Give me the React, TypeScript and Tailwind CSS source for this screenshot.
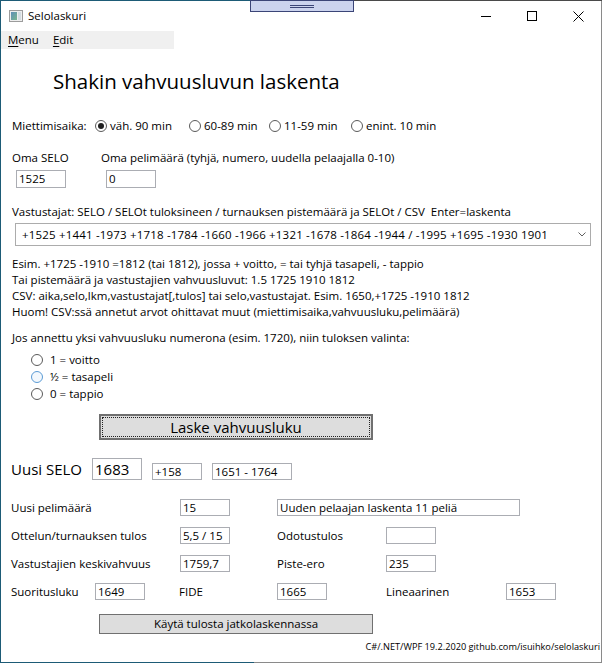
import React from 'react';

const FONT = "font-['Open_Sans','Noto_Sans',sans-serif]";

const Field = ({ className, text }: { className: string; text?: string }) => (
  <div
    className={`flex shrink-0 items-center overflow-hidden whitespace-nowrap border border-[#abadb3] bg-white pl-[2px] ${className}`}
  >
    {text}
  </div>
);

const Radio = ({ checked, hover }: { checked?: boolean; hover?: boolean }) => (
  <span
    className={`flex h-[12px] w-[12px] shrink-0 items-center justify-center rounded-full border ${
      hover ? 'border-[#5b9bd5] bg-[#f3f8fd]' : 'border-[#5a5a5a] bg-white'
    }`}
  >
    {checked && <span className="h-[6px] w-[6px] rounded-full bg-[#1f1f1f]" />}
  </span>
);

const TimeOption = ({ label, className, checked }: { label: string; className: string; checked?: boolean }) => (
  <div className={`flex items-center gap-[3px] ${className}`}>
    <Radio checked={checked} />
    <span>{label}</span>
  </div>
);

const ResultOption = ({ label, hover }: { label: string; hover?: boolean }) => (
  <div className="ml-[30px] flex h-[17px] items-center gap-[7px]">
    <Radio hover={hover} />
    <span>{label}</span>
  </div>
);

const AppIcon = () => (
  <svg width="14" height="12" viewBox="0 0 14 12">
    <defs>
      <linearGradient id="ic" x1="0" y1="0" x2="1" y2="1">
        <stop offset="0" stopColor="#5f8fb8" />
        <stop offset="1" stopColor="#79b58d" />
      </linearGradient>
    </defs>
    <rect x="0.5" y="0.5" width="13" height="11" fill="#eeeeee" stroke="#9c9c9c" />
    <rect x="2" y="2" width="6" height="8" fill="url(#ic)" />
    <rect x="9" y="2" width="3" height="8" fill="#d4dde2" />
  </svg>
);

const MinIcon = () => (
  <svg width="10" height="10" viewBox="0 0 10 10">
    <line x1="0" y1="5.5" x2="10" y2="5.5" stroke="#000" strokeWidth="1" />
  </svg>
);

const MaxIcon = () => (
  <svg width="10" height="10" viewBox="0 0 10 10">
    <rect x="0.5" y="0.5" width="9" height="9" fill="none" stroke="#000" strokeWidth="1" />
  </svg>
);

const CloseIcon = () => (
  <svg width="11" height="11" viewBox="0 0 11 11">
    <path d="M0.5 0.5 L10.5 10.5 M10.5 0.5 L0.5 10.5" stroke="#000" strokeWidth="1" />
  </svg>
);

const opponents =
  '+1525 +1441 -1973 +1718 -1784 -1660 -1966 +1321 -1678 -1864 -1944 / -1995 +1695 -1930 1901';

export default function App() {
  return (
    <div className={`relative h-[663px] w-[603px] overflow-hidden bg-white text-[11.5px] text-black ${FONT}`}>
      <div className="flex h-[663px] w-[602px] flex-col">
        {/* top edge */}
        <div className="flex h-[1px] shrink-0">
          <div className="w-[250px] bg-[#1d5b76]" />
          <div className="flex-1 bg-[#4a4a4a]" />
        </div>

        <div className="flex flex-1 flex-col border-l border-r border-l-[#1d5b76] border-r-[#8a8a8a]">
          {/* title bar */}
          <div className="flex h-[30px] shrink-0 items-center">
            <div className="ml-[8px]">
              <AppIcon />
            </div>
            <span className="ml-[5px] leading-[16px]">Selolaskuri</span>
            <div className="ml-auto flex h-full">
              <div className="flex w-[46px] items-center justify-center">
                <MinIcon />
              </div>
              <div className="flex w-[46px] items-center justify-center">
                <MaxIcon />
              </div>
              <div className="flex w-[46px] items-center justify-center">
                <CloseIcon />
              </div>
            </div>
          </div>

          {/* menu */}
          <div className="flex h-[18px] w-[173px] shrink-0 items-center bg-[#f0f0f0] leading-[18px]">
            <span className="ml-[7px]">
              <span className="underline underline-offset-2">M</span>enu
            </span>
            <span className="ml-[14px]">
              <span className="underline underline-offset-2">E</span>dit
            </span>
          </div>

          {/* heading */}
          <div className="ml-[52px] mt-[18px] h-[28px] text-[20.5px] leading-[28px]">
            Shakin vahvuusluvun laskenta
          </div>

          {/* time control */}
          <div className="mt-[23px] flex h-[16px] items-center leading-[16px]">
            <span className="ml-[11px] w-[83px] shrink-0">Miettimisaika:</span>
            <TimeOption className="w-[94px] shrink-0" label="väh. 90 min" checked />
            <TimeOption className="w-[80px] shrink-0" label="60-89 min" />
            <TimeOption className="w-[82px] shrink-0" label="11-59 min" />
            <TimeOption className="" label="enint. 10 min" />
          </div>

          {/* own rating */}
          <div className="mt-[16px] flex h-[16px] leading-[16px]">
            <span className="ml-[11px] w-[89px] shrink-0">Oma SELO</span>
            <span>Oma pelimäärä (tyhjä, numero, uudella pelaajalla 0-10)</span>
          </div>
          <div className="mt-[4px] flex h-[18px]">
            <Field className="ml-[15px] h-[18px] w-[50px]" text="1525" />
            <Field className="ml-[40px] h-[18px] w-[50px]" text="0" />
          </div>

          {/* opponents */}
          <div className="ml-[11px] mt-[16px] h-[16px] leading-[16px]">
            Vastustajat: SELO / SELOt tuloksineen / turnauksen pistemäärä ja SELOt / CSV&nbsp;&nbsp;Enter=laskenta
          </div>
          <div className="ml-[14px] mt-[3px] flex h-[23px] w-[576px] items-center border border-[#acacac] bg-white">
            <span className="ml-[6px] flex-1 whitespace-nowrap tracking-[0.18px]">{opponents}</span>
            <svg className="mr-[4px]" width="8" height="5" viewBox="0 0 8 5">
              <path d="M0.5 0.5 L4 4 L7.5 0.5" fill="none" stroke="#606060" strokeWidth="1" />
            </svg>
          </div>

          <div className="ml-[11px] mt-[10px] flex flex-col leading-[16px]">
            <span>Esim. +1725 -1910 =1812 (tai 1812), jossa + voitto, = tai tyhjä tasapeli, - tappio</span>
            <span>Tai pistemäärä ja vastustajien vahvuusluvut: 1.5 1725 1910 1812</span>
            <span>CSV: aika,selo,lkm,vastustajat[,tulos] tai selo,vastustajat. Esim. 1650,+1725 -1910 1812</span>
            <span>Huom! CSV:ssä annetut arvot ohittavat muut (miettimisaika,vahvuusluku,pelimäärä)</span>
          </div>

          <div className="ml-[11px] mt-[10px] h-[16px] leading-[16px]">
            Jos annettu yksi vahvuusluku numerona (esim. 1720), niin tuloksen valinta:
          </div>
          <div className="mt-[5px] flex flex-col leading-[16px]">
            <ResultOption label="1 = voitto" />
            <ResultOption label="½ = tasapeli" hover />
            <ResultOption label="0 = tappio" />
          </div>

          {/* calculate */}
          <div className="ml-[98px] mt-[12px] flex h-[26px] w-[274px] border-2 border-[#707070] bg-[#dddddd] p-[1px]">
            <div className="flex flex-1 items-center justify-center border border-dotted border-[#222222] text-[15px] leading-[20px]">
              Laske vahvuusluku
            </div>
          </div>

          {/* new rating */}
          <div className="mt-[18px] flex h-[22px] items-end">
            <span className="ml-[10px] h-[22px] w-[81px] shrink-0 text-[15px] leading-[22px]">Uusi SELO</span>
            <Field className="h-[22px] w-[50px] text-[15px]" text="1683" />
            <Field className="ml-[10px] h-[17px] w-[50px]" text="+158" />
            <Field className="ml-[10px] h-[17px] w-[80px]" text="1651 - 1764" />
          </div>

          <div className="mt-[19px] flex flex-col gap-[11px] leading-[16px]">
            <div className="flex h-[17px] items-center">
              <span className="ml-[10px] w-[169px] shrink-0">Uusi pelimäärä</span>
              <Field className="h-[17px] w-[50px]" text="15" />
              <Field className="ml-[47px] h-[17px] w-[243px]" text="Uuden pelaajan laskenta 11 peliä" />
            </div>
            <div className="flex h-[17px] items-center">
              <span className="ml-[10px] w-[169px] shrink-0">Ottelun/turnauksen tulos</span>
              <Field className="h-[17px] w-[50px]" text="5,5 / 15" />
              <span className="ml-[47px] w-[109px] shrink-0">Odotustulos</span>
              <Field className="h-[17px] w-[50px]" />
            </div>
            <div className="flex h-[17px] items-center">
              <span className="ml-[10px] w-[169px] shrink-0">Vastustajien keskivahvuus</span>
              <Field className="h-[17px] w-[50px]" text="1759,7" />
              <span className="ml-[47px] w-[109px] shrink-0">Piste-ero</span>
              <Field className="h-[17px] w-[50px]" text="235" />
            </div>
            <div className="flex h-[17px] items-center">
              <span className="ml-[10px] w-[84px] shrink-0">Suoritusluku</span>
              <Field className="h-[17px] w-[50px]" text="1649" />
              <span className="ml-[34px] w-[98px] shrink-0">FIDE</span>
              <Field className="h-[17px] w-[50px]" text="1665" />
              <span className="ml-[59px] w-[120px] shrink-0">Lineaarinen</span>
              <Field className="h-[17px] w-[50px]" text="1653" />
            </div>
          </div>

          <div className="ml-[98px] mt-[14px] flex h-[20px] w-[274px] items-center justify-center border border-[#707070] bg-[#dddddd] leading-[16px]">
            Käytä tulosta jatkolaskennassa
          </div>

          <div className="mt-[5px] h-[16px] pr-[1px] text-right text-[9.2px] leading-[16px]">
            C#/.NET/WPF 19.2.2020 github.com/isuihko/selolaskuri
          </div>
        </div>

        {/* bottom edge */}
        <div className="flex h-[1px] shrink-0">
          <div className="w-[254px] bg-[#1d5b76]" />
          <div className="flex-1 bg-[#8a8a8a]" />
        </div>
      </div>

      {/* drag handle overlay at the top */}
      <div className="absolute left-[250px] top-0 flex h-[12px] w-[104px] flex-col items-center justify-center gap-[1px] border border-[#3b4577] bg-[#cbd3ee]">
        <div className="h-[1px] w-[24px] bg-[#3b4577]" />
        <div className="h-[1px] w-[24px] bg-[#3b4577]" />
      </div>
    </div>
  );
}
